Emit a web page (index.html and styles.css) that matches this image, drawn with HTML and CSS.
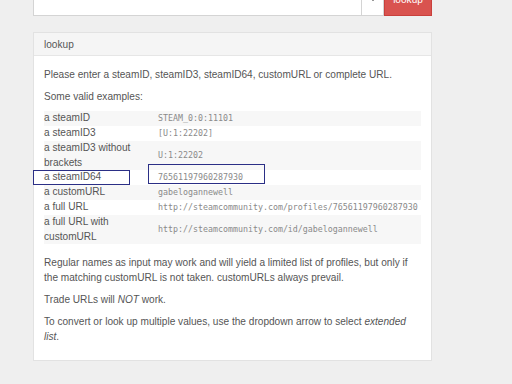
FILE: index.html
```html
<!DOCTYPE html>
<html lang="en">
<head>
    <meta charset="UTF-8">
    <title>steamID lookup</title>
    <link rel="stylesheet" href="styles.css">
</head>
<body>
    <div class="page">
        <div class="search">
            <input type="text" class="search-input">
            <button class="dropdown-btn"><span class="caret"></span></button>
            <button class="lookup-btn">lookup</button>
        </div>

        <div class="panel">
            <div class="panel-heading">lookup</div>
            <div class="panel-body">
                <p>Please enter a steamID, steamID3, steamID64, customURL or complete URL.</p>
                <p>Some valid examples:</p>
                <table class="examples">
                    <tr>
                        <td class="label">a steamID</td>
                        <td class="value">STEAM_0:0:11101</td>
                    </tr>
                    <tr>
                        <td class="label">a steamID3</td>
                        <td class="value">[U:1:22202]</td>
                    </tr>
                    <tr>
                        <td class="label">a steamID3 without brackets</td>
                        <td class="value">U:1:22202</td>
                    </tr>
                    <tr>
                        <td class="label marked">a steamID64</td>
                        <td class="value marked">76561197960287930</td>
                    </tr>
                    <tr>
                        <td class="label">a customURL</td>
                        <td class="value">gabelogannewell</td>
                    </tr>
                    <tr>
                        <td class="label">a full URL</td>
                        <td class="value">http://steamcommunity.com/profiles/76561197960287930</td>
                    </tr>
                    <tr>
                        <td class="label">a full URL with customURL</td>
                        <td class="value">http://steamcommunity.com/id/gabelogannewell</td>
                    </tr>
                </table>
                <p class="notes">Regular names as input may work and will yield a limited list of profiles, but only if the matching customURL is not taken. customURLs always prevail.</p>
                <p>Trade URLs will <em>NOT</em> work.</p>
                <p>To convert or look up multiple values, use the dropdown arrow to select <em>extended list</em>.</p>
            </div>
        </div>
    </div>
</body>
</html>
```

FILE: styles.css
```css
body {
    margin: 0;
    background-color: #efefef;
    font-family: "Liberation Sans", Arial, sans-serif;
    font-size: 10.1px;
    line-height: 15px;
    color: #555;
    overflow: hidden;
}

.page {
    width: 399px;
    margin-left: 33px;
}

.search {
    display: flex;
    height: 34px;
    margin-top: -18px;
}

.search-input {
    flex: 1;
    margin: 0;
    border: 1px solid #d4d4d4;
    border-right: none;
    background-color: #fff;
}

.dropdown-btn {
    width: 23px;
    margin: 0;
    padding: 0;
    border: 1px solid #d4d4d4;
    background-color: #fff;
    display: flex;
    align-items: center;
    justify-content: center;
}

.caret {
    width: 0;
    height: 0;
    border-left: 3px solid transparent;
    border-right: 3px solid transparent;
    border-top: 3px solid #333;
}

.lookup-btn {
    width: 48px;
    margin: 0;
    border: 1px solid #c9403c;
    background-color: #d9534f;
    color: #fff;
    font-family: "Liberation Sans", Arial, sans-serif;
    font-size: 10.1px;
}

.panel {
    margin-top: 16px;
    background-color: #fff;
    border: 1px solid #e2e2e2;
}

.panel-heading {
    background-color: #f5f5f5;
    border-bottom: 1px solid #e6e6e6;
    padding: 4px 10px;
    height: 14px;
}

.panel-body {
    padding: 11px 10px 9px;
}

p {
    margin: 0 0 7px;
}

.examples {
    width: 100%;
    border-collapse: collapse;
    margin: 0 0 11px;
}

.examples tr:nth-child(odd) {
    background-color: #f7f7f7;
}

.examples td {
    padding: 0;
    vertical-align: middle;
}

.label {
    width: 114px;
    line-height: 14.5px;
}

.value {
    font-family: "DejaVu Sans Mono", "Liberation Mono", monospace;
    font-size: 8.3px;
    color: #8a8a8a;
    white-space: nowrap;
}

.marked {
    position: relative;
}

.label.marked::after {
    content: '';
    position: absolute;
    left: -11px;
    top: 0;
    width: 95px;
    height: 13px;
    border: 1.5px solid #2b2f86;
}

.value.marked::after {
    content: '';
    position: absolute;
    left: -10px;
    top: -6px;
    width: 115px;
    height: 18px;
    border: 1.5px solid #2b2f86;
}

em {
    font-style: italic;
}
```
